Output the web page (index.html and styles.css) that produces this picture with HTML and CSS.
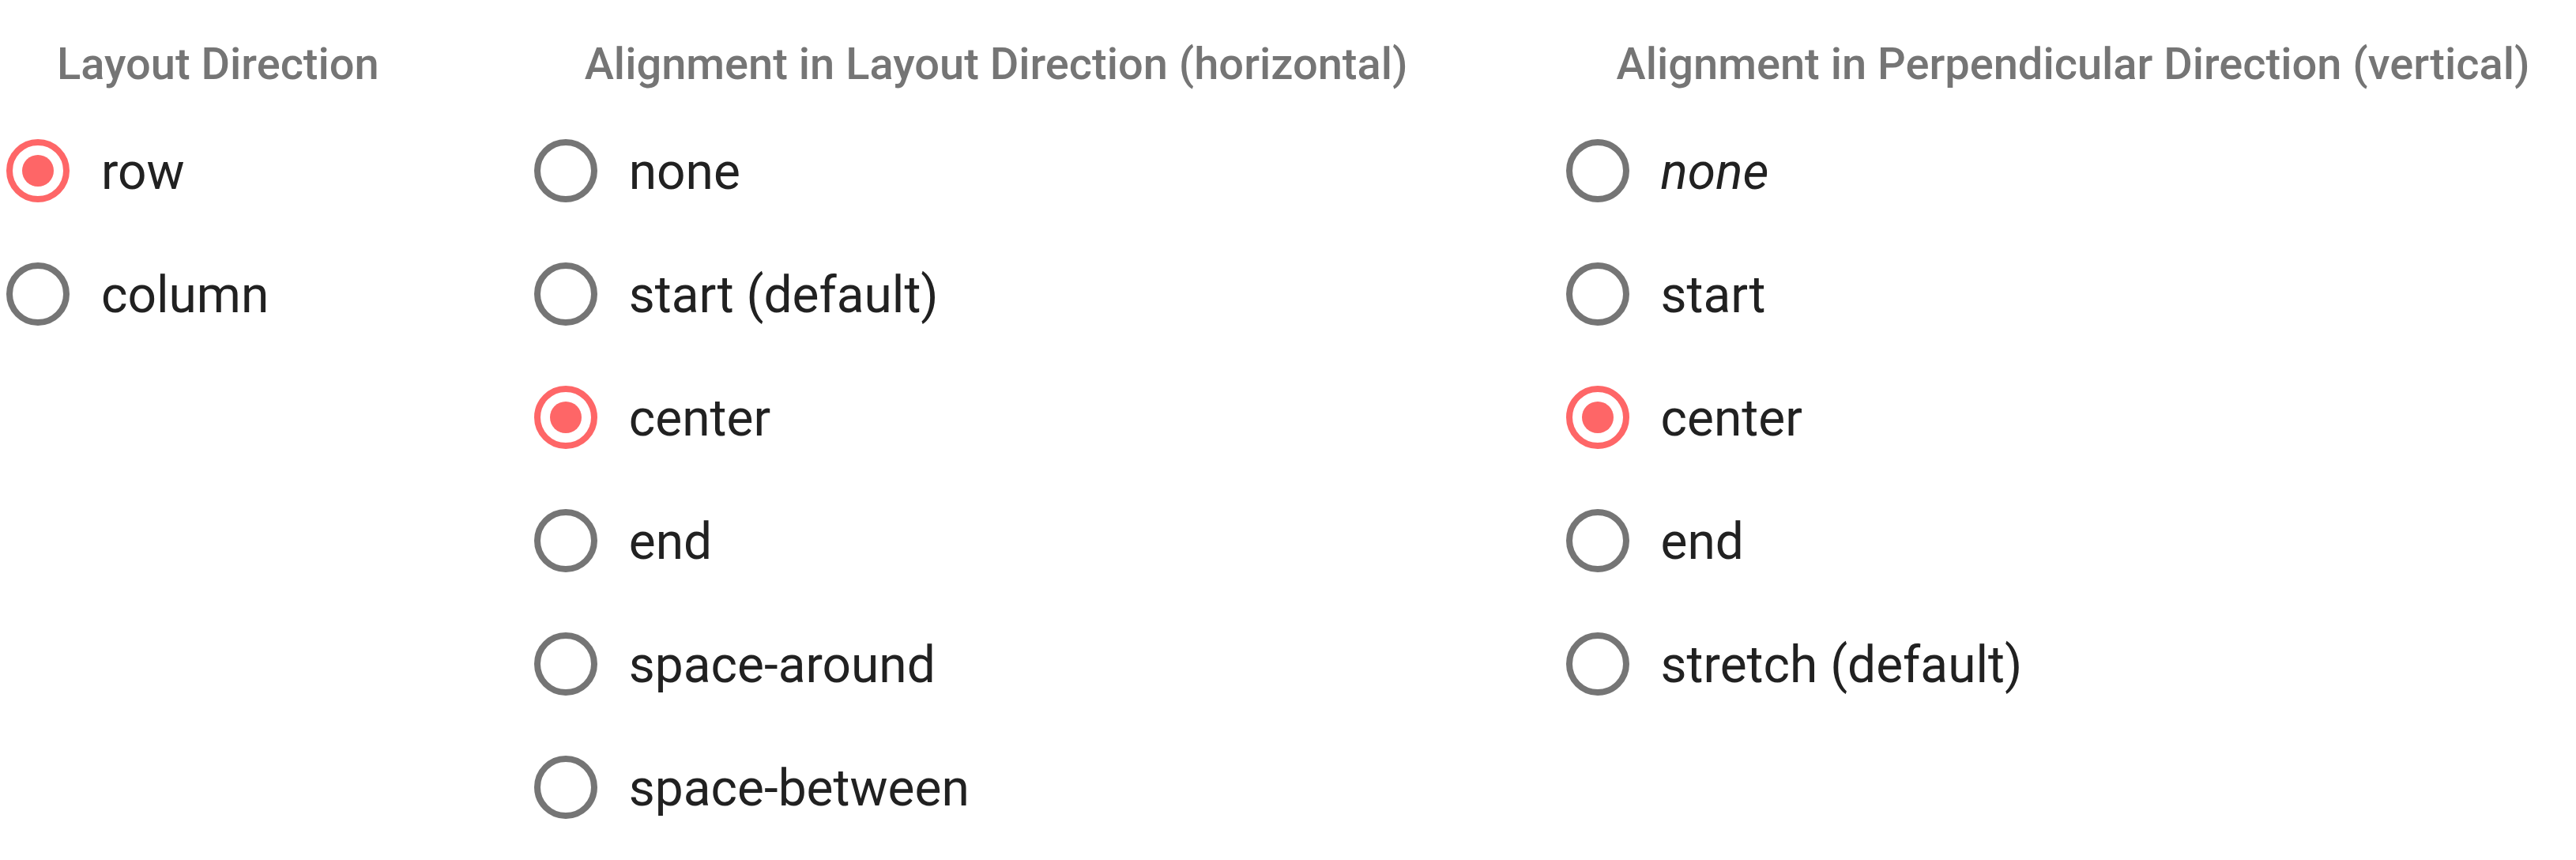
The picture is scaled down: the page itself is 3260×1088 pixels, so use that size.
FILE: index.html
```html
<!DOCTYPE html>
<html>
<head>
<meta charset="utf-8">
<link rel="stylesheet" href="styles.css">
</head>
<body>
<div class="panel">
  <div class="group">
    <div class="title title-first">Layout Direction</div>
    <div class="option"><span class="radio checked"></span><span class="label">row</span></div>
    <div class="option"><span class="radio"></span><span class="label">column</span></div>
  </div>
  <div class="group">
    <div class="title">Alignment in Layout Direction (horizontal)</div>
    <div class="option"><span class="radio"></span><span class="label">none</span></div>
    <div class="option"><span class="radio"></span><span class="label">start (default)</span></div>
    <div class="option"><span class="radio checked"></span><span class="label">center</span></div>
    <div class="option"><span class="radio"></span><span class="label">end</span></div>
    <div class="option"><span class="radio"></span><span class="label">space-around</span></div>
    <div class="option"><span class="radio"></span><span class="label">space-between</span></div>
  </div>
  <div class="group">
    <div class="title">Alignment in Perpendicular Direction (vertical)</div>
    <div class="option"><span class="radio"></span><span class="label italic">none</span></div>
    <div class="option"><span class="radio"></span><span class="label">start</span></div>
    <div class="option"><span class="radio checked"></span><span class="label">center</span></div>
    <div class="option"><span class="radio"></span><span class="label">end</span></div>
    <div class="option"><span class="radio"></span><span class="label">stretch (default)</span></div>
  </div>
</div>
</body>
</html>
```
FILE: styles.css
```css
html, body {
  margin: 0;
  padding: 0;
  background: #ffffff;
}
body {
  font-family: Roboto, "Liberation Sans", sans-serif;
  width: 3260px;
  height: 1088px;
  overflow: hidden;
}
.panel {
  display: flex;
  align-items: flex-start;
  gap: 136px;
  padding: 49px 0 0 8px;
}
.group {
  display: flex;
  flex-direction: column;
  align-items: flex-start;
}
.title {
  font-size: 56px;
  font-weight: 500;
  line-height: 64px;
  color: #757575;
  padding: 0 64px;
  white-space: nowrap;
  margin-bottom: 25px;
}
.title-first {
  padding-right: 60px;
}
.option {
  display: flex;
  align-items: center;
  height: 156px;
}
.radio {
  box-sizing: border-box;
  width: 80px;
  height: 80px;
  border: 8px solid #757575;
  border-radius: 50%;
  display: flex;
  align-items: center;
  justify-content: center;
  flex: none;
}
.radio.checked {
  border-color: #fe6667;
}
.radio.checked::after {
  content: "";
  width: 40px;
  height: 40px;
  border-radius: 50%;
  background: #fe6667;
}
.label {
  margin-left: 40px;
  font-size: 64px;
  line-height: 80px;
  color: #212121;
  white-space: nowrap;
  padding-top: 4px;
}
.italic {
  font-style: italic;
}
```
